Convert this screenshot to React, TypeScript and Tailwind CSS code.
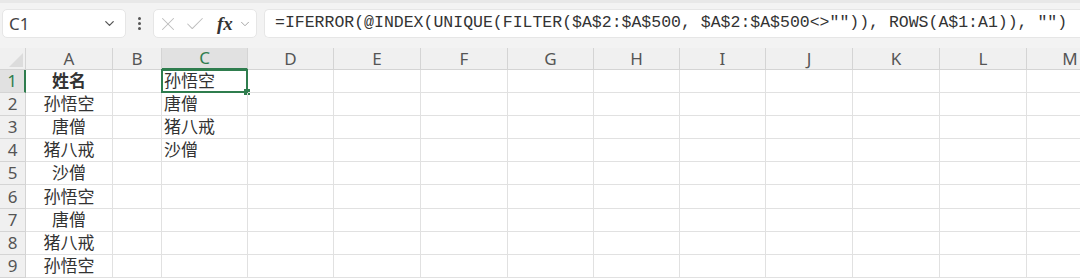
import { ChevronDown, X, Check } from 'lucide-react';

const font = '"Noto Sans", "Noto Sans CJK SC", sans-serif';

const columns = [
  { label: 'A', width: 'w-[87px]' },
  { label: 'B', width: 'w-[49px]' },
  { label: 'C', width: 'w-[86px]' },
  { label: 'D', width: 'w-[86px]' },
  { label: 'E', width: 'w-[87px]' },
  { label: 'F', width: 'w-[87px]' },
  { label: 'G', width: 'w-[86px]' },
  { label: 'H', width: 'w-[86px]' },
  { label: 'I', width: 'w-[86px]' },
  { label: 'J', width: 'w-[87px]' },
  { label: 'K', width: 'w-[87px]' },
  { label: 'L', width: 'w-[87px]' },
  { label: 'M', width: 'w-[87px]' },
];

const colA = ['姓名', '孙悟空', '唐僧', '猪八戒', '沙僧', '孙悟空', '唐僧', '猪八戒', '孙悟空'];
const colC = ['孙悟空', '唐僧', '猪八戒', '沙僧'];
const rowHeights = ['h-[23px]', 'h-[23px]', 'h-[23px]', 'h-[23px]', 'h-[23px]', 'h-[24px]', 'h-[23px]', 'h-[23px]', 'h-[23px]'];

const formula = '=IFERROR(@INDEX(UNIQUE(FILTER($A$2:$A$500, $A$2:$A$500<>"")), ROWS(A$1:A1)), "")';

const FormulaBar = () => (
  <div className="h-[48px] bg-[#f3f3f3] border-t-[3px] border-[#e8e8e8] flex items-start pt-[6px] pl-[2px]">
    {/* Name box */}
    <div className="w-[124px] h-[29px] bg-white rounded-[5px] border border-[#e6e6e6] flex items-center justify-between pl-[6px] pr-[8px]">
      <span className="text-[17px] text-[#444]" style={{ fontFamily: font }}>C1</span>
      <ChevronDown size={15} strokeWidth={2} className="text-[#555]" />
    </div>
    {/* separator dots */}
    <div className="w-[27px] h-[29px] flex flex-col items-center justify-center gap-[2px]">
      <span className="w-[3px] h-[3px] rounded-full bg-[#555]" />
      <span className="w-[3px] h-[3px] rounded-full bg-[#555]" />
      <span className="w-[3px] h-[3px] rounded-full bg-[#555]" />
    </div>
    {/* cancel / enter / fx */}
    <div className="w-[104px] h-[29px] bg-white rounded-[5px] border border-[#e6e6e6] flex items-center pl-[3px]">
      <X size={22} strokeWidth={1.1} className="text-[#bdbdbd]" />
      <Check size={22} strokeWidth={1.1} className="text-[#bdbdbd] ml-[5px]" />
      <span className="ml-[11px] text-[19px] italic font-semibold text-[#333] leading-none" style={{ fontFamily: '"Liberation Serif", serif' }}>
        fx
      </span>
      <ChevronDown size={14} strokeWidth={1.5} className="text-[#999] ml-[5px]" />
    </div>
    {/* formula */}
    <div className="ml-[7px] flex-1 h-[29px] bg-white rounded-l-[5px] border border-[#e6e6e6] border-r-0 flex items-center pl-[10px] overflow-hidden whitespace-nowrap">
      <span className="text-[16.5px] text-[#333]" style={{ fontFamily: '"Liberation Mono", monospace' }}>
        {formula}
      </span>
    </div>
  </div>
);

const HeaderRow = () => (
  <div className="flex h-[22px]">
    <div className="w-[26px] shrink-0 bg-[#f0f0f0] border-r border-b border-[#d4d4d4] relative">
      <div className="absolute right-[2px] bottom-[2px] w-0 h-0 border-l-[14px] border-l-transparent border-b-[14px] border-b-[#dcdcdc]" />
    </div>
    {columns.map((col) => {
      const active = col.label === 'C';
      return (
        <div
          key={col.label}
          className={
            active
              ? `${col.width} shrink-0 bg-[#e1e1e1] border-r border-[#d4d4d4] border-b-2 border-b-[#2f7d4e] flex items-center justify-center text-[17px] text-[#2f7d4e]`
              : `${col.width} shrink-0 bg-[#f0f0f0] border-r border-b border-[#d4d4d4] flex items-center justify-center text-[17px] text-[#555]`
          }
        >
          {col.label}
        </div>
      );
    })}
  </div>
);

const App = () => {
  return (
    <div className="w-[1080px] h-[279px] overflow-hidden bg-white" style={{ fontFamily: font }}>
      <FormulaBar />
      <HeaderRow />
      {rowHeights.map((h, r) => (
        <div key={r} className={`flex ${h}`}>
          <div
            className={
              r === 0
                ? 'w-[26px] shrink-0 bg-[#e1e1e1] border-r-2 border-r-[#2f7d4e] border-b border-[#d4d4d4] flex items-center justify-center text-[17px] text-[#2f7d4e]'
                : 'w-[26px] shrink-0 bg-[#f0f0f0] border-r border-b border-[#d4d4d4] flex items-center justify-center text-[17px] text-[#555]'
            }
          >
            {r + 1}
          </div>
          {columns.map((col) => {
            let content: string | undefined;
            if (col.label === 'A') content = colA[r];
            if (col.label === 'C') content = colC[r];
            const selected = col.label === 'C' && r === 0;
            return (
              <div
                key={col.label}
                className={`${col.width} shrink-0 border-r border-b border-[#e1e1e1] flex items-center relative text-[17px] text-[#333] ${
                  col.label === 'A' ? 'justify-center' : 'justify-start pl-[2px]'
                } ${col.label === 'A' && r === 0 ? 'font-bold text-[#222]' : ''}`}
              >
                {content}
                {selected && (
                  <>
                    <div className="absolute -top-[1px] -left-[1px] right-[-1px] bottom-[-1px] border-2 border-[#2f7d4e]" />
                    <div className="absolute right-[-3px] bottom-[-3px] w-[6px] h-[6px] bg-[#2f7d4e]" />
                  </>
                )}
              </div>
            );
          })}
        </div>
      ))}
    </div>
  );
};

export default App;
